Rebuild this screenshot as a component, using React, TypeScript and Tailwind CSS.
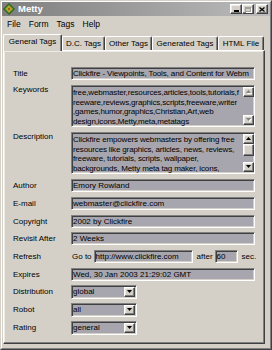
import React from 'react'

const sunken =
  'border border-t-[#808080] border-l-[#808080] border-r-white border-b-white shadow-[inset_1px_1px_0_#404040,inset_-1px_-1px_0_#d4d0c8]'
const raised =
  'border border-t-white border-l-white border-r-[#404040] border-b-[#404040] shadow-[inset_-1px_-1px_0_#808080,inset_1px_1px_0_#ecebe6]'

const keywordLines = [
  'free,webmaster,resources,articles,tools,tutorials,f',
  'reeware,reviews,graphics,scripts,freeware,writer',
  ',games,humor,graphics,Christian,Art,web',
  'design,icons,Metty,meta,metatags',
]

const descriptionLines = [
  'Clickfire empowers webmasters by offering free',
  'resources like graphics, articles, news, reviews,',
  'freeware, tutorials, scripts, wallpaper,',
  'backgrounds, Metty meta tag maker, icons,',
]

const tabs = [
  { name: 'General Tags', width: 'w-[59px]', active: true },
  { name: 'D.C. Tags', width: 'w-[43px]' },
  { name: 'Other Tags', width: 'w-[47px]' },
  { name: 'Generated Tags', width: 'w-[66px]' },
  { name: 'HTML File', width: 'w-[46px]' },
]

function Tri({ up, disabled }: { up?: boolean; disabled?: boolean }) {
  const pts = up ? '0,3 2.5,0 5,3' : '0,0 2.5,3 5,0'
  return (
    <svg width="6" height="4" viewBox="0 0 6 4">
      {disabled && <polygon points={pts} fill="#ffffff" transform="translate(1,1)" />}
      <polygon points={pts} fill={disabled ? '#808080' : '#000000'} />
    </svg>
  )
}

function ScrollBtn({ up, disabled }: { up?: boolean; disabled?: boolean }) {
  return (
    <div className={`${raised} bg-[#d4d0c8] w-[11px] h-[10px] flex items-center justify-center`}>
      <Tri up={up} disabled={disabled} />
    </div>
  )
}

function Field({ value, className = '' }: { value: string; className?: string }) {
  return (
    <div
      className={`${sunken} bg-[#a7a6ae] h-[13px] flex items-center pl-[1px] overflow-hidden whitespace-nowrap leading-[9px] ${className}`}
    >
      {value}
    </div>
  )
}

function TextBox({ lines, disabled, thumb }: { lines: string[]; disabled?: boolean; thumb?: boolean }) {
  return (
    <div className={`${sunken} bg-[#a7a6ae] h-[42px] flex-1 flex`}>
      <div className="flex-1 pl-[1px] pt-[2px] overflow-hidden leading-[9.5px] tracking-[-0.15px]">
        {lines.map((l) => (
          <div key={l} className="whitespace-nowrap">
            {l}
          </div>
        ))}
      </div>
      <div className="w-[11px] flex flex-col py-[1px]">
        <ScrollBtn up disabled={disabled} />
        {thumb && <div className={`${raised} bg-[#d4d0c8] h-[12px] w-[11px]`} />}
        <div className="flex-1" />
        <ScrollBtn disabled={disabled} />
      </div>
    </div>
  )
}

function Select({ value }: { value: string }) {
  return (
    <div className={`${sunken} bg-[#a7a6ae] h-[14px] w-[66px] flex items-center`}>
      <span className="flex-1 pl-[1px] leading-[10px]">{value}</span>
      <div className={`${raised} bg-[#d4d0c8] w-[11px] h-[10px] mr-[1px] flex items-center justify-center`}>
        <Tri />
      </div>
    </div>
  )
}

function Row({ label, tall, className = '', children }: { label: string; tall?: boolean; className?: string; children: React.ReactNode }) {
  return (
    <div className={`flex items-start ${className}`}>
      <div className={`w-[58px] shrink-0 ${tall ? 'leading-[10px]' : 'leading-[13px]'}`}>{label}</div>
      {children}
    </div>
  )
}

function MettyIcon() {
  return (
    <svg width="12" height="12" viewBox="0 0 12 12">
      <polygon points="6,0 12,6 6,12 0,6" fill="#2f5f1c" />
      <polygon points="6,1.5 10.5,6 6,10.5 1.5,6" fill="#6a9a2c" />
      <polygon points="6,3 9,6 6,9 3,6" fill="#d8a830" />
      <polygon points="6,4.5 7.5,6 6,7.5 4.5,6" fill="#8a5a18" />
    </svg>
  )
}

export default function App() {
  return (
    <div className="w-[272px] h-[350px] bg-[#d4d0c8] text-black text-[8px] font-['Liberation_Sans',Arial,sans-serif] border border-t-[#d4d0c8] border-l-[#d4d0c8] border-r-[#404040] border-b-[#404040]">
      <div className="h-full flex flex-col border border-t-white border-l-white border-r-[#808080] border-b-[#808080]">
        {/* title bar */}
        <div className="h-[14px] flex items-center bg-linear-to-r from-[#7f7f7f] to-[#bcbcbc] pl-[1px] pr-[2px]">
          <MettyIcon />
          <span className="ml-[3px] text-white font-bold text-[9.5px] leading-[12px]">Metty</span>
          <div className="flex-1" />
          <div className={`${raised} bg-[#d4d0c8] w-[12px] h-[10px] flex items-end justify-center pb-[1.5px]`}>
            <div className="w-[5px] h-[1.5px] bg-black" />
          </div>
          <div className={`${raised} bg-[#d4d0c8] w-[12px] h-[10px] flex items-center justify-center`}>
            <div className="w-[6px] h-[5px] border border-t-2 border-[#a0a0a0] shadow-[1px_1px_0_#ffffff]" />
          </div>
          <div className={`${raised} bg-[#d4d0c8] w-[12px] h-[10px] ml-[2px] flex items-center justify-center`}>
            <svg width="6" height="5" viewBox="0 0 6 5">
              <path d="M0.5 0.5 L5.5 4.5 M5.5 0.5 L0.5 4.5" stroke="#000" strokeWidth="1.3" />
            </svg>
          </div>
        </div>

        {/* menu */}
        <div className="h-[16px] flex items-center pl-[5px] gap-[8px] text-[8.5px]">
          <span>File</span>
          <span>Form</span>
          <span>Tags</span>
          <span>Help</span>
        </div>

        {/* tabs */}
        <div className="h-[18px] flex items-end ml-[1px]">
          {tabs.map((t) => (
            <div
              key={t.name}
              className={`${t.width} ${
                t.active ? 'h-[17px] -mb-[1px] relative z-10 pb-[2px]' : 'h-[14px]'
              } bg-[#d4d0c8] rounded-t-[2px] border-t border-l border-r border-t-white border-l-white border-r-[#404040] shadow-[inset_-1px_0_0_#808080] flex items-center justify-center whitespace-nowrap leading-[10px]`}
            >
              {t.name}
            </div>
          ))}
        </div>

        {/* panel */}
        <div className={`${raised} flex-1 ml-[1px] mr-[5px] mb-[4px] pt-[16px] pl-[9px] pr-[9px] flex flex-col`}>
          <Row label="Title">
            <Field value="Clickfire - Viewpoints, Tools, and Content for Webm" className="flex-1 tracking-[-0.12px]" />
          </Row>
          <Row label="Keywords" tall className="mt-[5px]">
            <TextBox lines={keywordLines} disabled />
          </Row>
          <Row label="Description" tall className="mt-[5px]">
            <TextBox lines={descriptionLines} thumb />
          </Row>
          <Row label="Author" className="mt-[5px]">
            <Field value="Emory Rowland" className="flex-1" />
          </Row>
          <Row label="E-mail" className="mt-[5px]">
            <Field value="webmaster@clickfire.com" className="flex-1" />
          </Row>
          <Row label="Copyright" className="mt-[5px]">
            <Field value="2002 by Clickfire" className="flex-1" />
          </Row>
          <Row label="Revisit After" className="mt-[4px]">
            <Field value="2 Weeks" className="flex-1" />
          </Row>
          <Row label="Refresh" className="mt-[5px]">
            <div className="flex items-center h-[13px] whitespace-nowrap">
              <span className="pl-[1px] shrink-0">Go to</span>
              <Field value="http://www.clickfire.com" className="ml-[2px] w-[99px] shrink-0" />
              <span className="ml-[4px] shrink-0">after</span>
              <Field value="60" className="ml-[2px] w-[23px] shrink-0" />
              <span className="ml-[4px] shrink-0">sec.</span>
            </div>
          </Row>
          <Row label="Expires" className="mt-[5px]">
            <Field value="Wed, 30 Jan 2003 21:29:02 GMT" className="flex-1" />
          </Row>
          <Row label="Distribution" className="mt-[4px]">
            <Select value="global" />
          </Row>
          <Row label="Robot" className="mt-[4px]">
            <Select value="all" />
          </Row>
          <Row label="Rating" className="mt-[4px]">
            <Select value="general" />
          </Row>
        </div>
      </div>
    </div>
  )
}
